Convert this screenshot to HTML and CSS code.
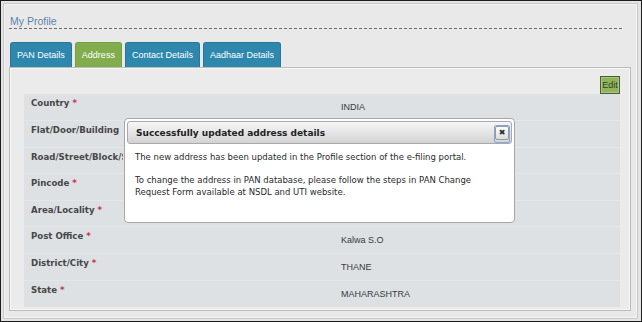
FILE: index.html
```html
<html>
    <head>
        <title>My Profile</title>
        <link rel="stylesheet" href="styles.css">
    </head>
    <body>
        <div class="frame">
            <div class="box">
                <div class="heading">My Profile</div>
                <div class="tabs">
                    <span class="tab">PAN Details</span>
                    <span class="tab active">Address</span>
                    <span class="tab">Contact Details</span>
                    <span class="tab">Aadhaar Details</span>
                </div>
                <div class="panel">
                    <div class="toolbar">
                        <button type="button" class="editBtn">Edit</button>
                    </div>
                    <table class="addressTable">
                        <tr><td class="label"><span class="labelText">Country <span class="req">*</span></span></td><td class="value">INDIA</td></tr>
                        <tr><td class="label"><span class="labelText">Flat/Door/Building</span></td><td class="value"></td></tr>
                        <tr><td class="label"><span class="labelText">Road/Street/Block/Sector</span></td><td class="value"></td></tr>
                        <tr><td class="label"><span class="labelText">Pincode <span class="req">*</span></span></td><td class="value"></td></tr>
                        <tr><td class="label"><span class="labelText">Area/Locality <span class="req">*</span></span></td><td class="value"></td></tr>
                        <tr><td class="label"><span class="labelText">Post Office <span class="req">*</span></span></td><td class="value">Kalwa S.O</td></tr>
                        <tr><td class="label"><span class="labelText">District/City <span class="req">*</span></span></td><td class="value">THANE</td></tr>
                        <tr><td class="label"><span class="labelText">State <span class="req">*</span></span></td><td class="value">MAHARASHTRA</td></tr>
                    </table>
                </div>
            </div>

            <!-- popup shown after saving -->
            <div class="dialog">
                <div class="dialogHead">
                    <span class="dialogTitle">Successfully updated address details</span>
                    <span class="closeFocus"><span class="closeBtn">&#10006;</span></span>
                </div>
                <div class="dialogBody">
                    <p>The new address has been updated in the Profile section of the e-filing portal.</p>
                    <p>To change the address in PAN database, please follow the steps in PAN Change Request Form available at NSDL and UTI website.</p>
                </div>
            </div>
        </div>
    </body>
</html>
```

FILE: styles.css
```css
body {
    margin: 0;
}
.frame {
    position: relative;
    width: 642px;
    height: 322px;
    box-sizing: border-box;
    border: 1px solid #1c1c1c;
    background-color: #e4e4e4;
    padding: 2px 3px 2px 2px;
}
.box {
    height: 100%;
    box-sizing: border-box;
    border: 1px solid #c9c9c9;
    box-shadow: inset 0 0 0 1px #f2f2f2;
    background-color: #e9e9e9;
    padding: 11px 6px 0 5px;
}
.heading {
    font-family: "Liberation Sans", Arial, sans-serif;
    font-size: 10.5px;
    line-height: 12px;
    color: #5d85a8;
    padding: 0 0 1px 1px;
    margin-right: 9px;
    border-bottom: 1px dashed #6b6b6b;
}
.tabs {
    display: flex;
    gap: 3px;
    margin: 13px 0 0 1px;
}
.tab {
    height: 25px;
    box-sizing: border-box;
    padding: 0 6px;
    line-height: 24px;
    font-family: "Liberation Sans", Arial, sans-serif;
    font-size: 9px;
    color: #fff;
    background-color: #2e87ad;
    border: 1px solid #2a7698;
    border-bottom: none;
    border-radius: 3px 3px 0 0;
}
.tab.active {
    background-color: #81ad4c;
    border-color: #74a042;
}
.panel {
    border: 1px solid #bcbcbc;
    box-shadow: inset 0 0 0 1px #f6f6f6;
    background-color: #ebebeb;
    padding: 8px 10px 3px 14px;
}
.toolbar {
    display: flex;
    justify-content: flex-end;
}
.editBtn {
    width: 20px;
    height: 18px;
    padding: 0;
    font-family: "Liberation Sans", Arial, sans-serif;
    font-size: 9px;
    color: #35421f;
    background-color: #8fb45c;
    border: 1px solid #4d5d37;
    box-shadow: inset 0 0 0 1px #a9c87d;
}
.addressTable {
    width: 100%;
    border-collapse: collapse;
    background-color: #dde1e4;
}
.addressTable tr {
    height: 26.6px;
    border-top: 1px solid #e4e7e9;
}
.addressTable tr:first-child {
    border-top: none;
}
.label {
    width: 310px;
    vertical-align: top;
    padding: 4px 0 0 7px;
    font-family: "DejaVu Sans", Verdana, sans-serif;
    font-weight: bold;
    font-size: 8.6px;
    color: #474747;
}
.labelText {
    display: block;
    width: 92px;
    white-space: nowrap;
    overflow: hidden;
}
.req {
    color: #d0343a;
}
.value {
    vertical-align: middle;
    padding: 0;
    font-family: "Liberation Sans", Arial, sans-serif;
    font-size: 9px;
    color: #3b3b3b;
}
.dialog {
    position: absolute;
    left: 123px;
    top: 117px;
    width: 391px;
    height: 105px;
    box-sizing: border-box;
    background-color: #fff;
    border: 1px solid #a7a7a7;
    border-radius: 4px;
    padding: 2px;
}
.dialogHead {
    height: 23px;
    box-sizing: border-box;
    border: 1px solid #aaaaaa;
    border-radius: 3px;
    background: linear-gradient(#f7f7f7, #d3d3d3);
    display: flex;
    align-items: flex-start;
    justify-content: space-between;
    padding: 0 1px 0 8px;
}
.dialogTitle {
    font-family: "DejaVu Sans", Verdana, sans-serif;
    font-weight: bold;
    font-size: 9px;
    line-height: 23px;
    color: #222;
}
.closeFocus {
    margin-top: 3px;
    width: 14px;
    height: 16px;
    border: 1px solid #86a7dd;
    border-radius: 2px;
}
.closeBtn {
    display: block;
    width: 12px;
    height: 12px;
    border: 1px solid #9a9a9a;
    border-radius: 2px;
    background: linear-gradient(#ffffff, #dcdcdc);
    font-size: 8px;
    line-height: 12px;
    text-align: center;
    color: #2a2a2a;
    font-family: "DejaVu Sans", sans-serif;
}
.dialogBody {
    padding: 7px 8px 0 8px;
    font-family: "DejaVu Sans", Verdana, sans-serif;
    font-size: 8.5px;
    line-height: 12px;
    color: #2a2a2a;
}
.dialogBody p {
    margin: 0 0 11px 0;
}
```
